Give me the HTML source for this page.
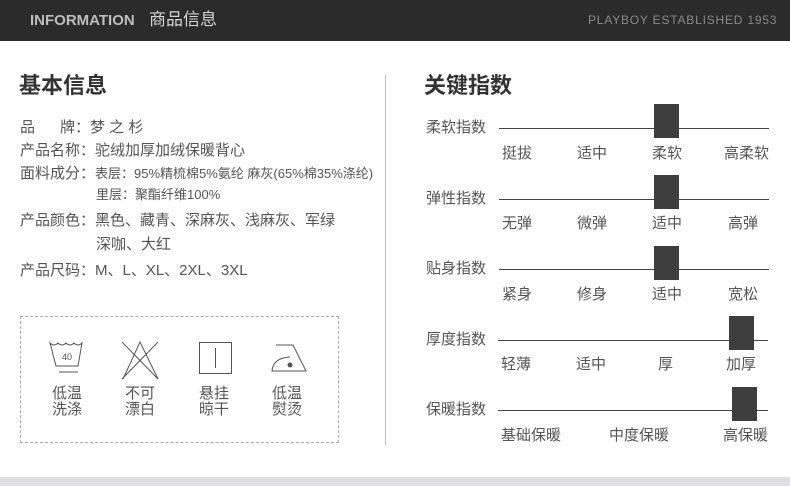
<!DOCTYPE html>
<html><head><meta charset="utf-8"><style>
*{margin:0;padding:0;box-sizing:border-box}
body{width:790px;height:496px;background:#fff;position:relative;overflow:hidden;font-family:"Liberation Sans","Noto Sans CJK SC",sans-serif;color:#555}
.a{position:absolute;white-space:nowrap;line-height:18px}
.hd{position:absolute;left:0;top:0;width:790px;height:41px;background:#2b2b2b}
.t{font-size:15px;line-height:18px}
.line{position:absolute;height:1px;background:#444}
.mk{position:absolute;width:25px;height:34px;background:#3e3e3e}
</style></head><body>
<div class="hd"></div>
<div class="a" style="left:30px;top:12px;color:#bdbdbd;font-size:15px;font-weight:bold;line-height:18px">INFORMATION</div>
<div class="a" style="left:149px;top:10px;color:#d5d5d5;font-size:17px;line-height:20px">商品信息</div>
<div class="a" style="left:588px;top:12px;color:#8a8a8a;font-size:12px;letter-spacing:0.8px;line-height:16px">PLAYBOY ESTABLISHED 1953</div>

<div class="a" style="left:19px;top:73px;font-size:22px;font-weight:bold;color:#333;line-height:26px">基本信息</div>
<div class="a t" style="left:20px;top:119px">品&nbsp;&nbsp;&nbsp;&nbsp;&nbsp;&nbsp;牌：梦 之 杉</div>
<div class="a t" style="left:20px;top:142px">产品名称：驼绒加厚加绒保暖背心</div>
<div class="a t" style="left:20px;top:165px">面料成分：<span style="font-size:13px">表层：95%精梳棉5%氨纶 麻灰(65%棉35%涤纶)</span></div>
<div class="a" style="left:96px;top:186px;font-size:13px">里层：聚酯纤维100%</div>
<div class="a t" style="left:20px;top:212px">产品颜色：黑色、藏青、深麻灰、浅麻灰、军绿</div>
<div class="a t" style="left:96px;top:236px">深咖、大红</div>
<div class="a t" style="left:20px;top:262px">产品尺码：M、L、XL、2XL、3XL</div>

<div class="a" style="left:385px;top:75px;width:1px;height:370px;background:#bbb"></div>

<div class="a" style="left:20px;top:316px;width:319px;height:127px;border:1px dashed #aaa"></div>
<svg class="a" style="left:0;top:0" width="390" height="496">
<g fill="none" stroke="#555" stroke-width="1">
<path d="M50 343 Q54 347 58 343 Q62 347 66 343 Q70 347 74 343 Q78 347 82 343 L78 366 L56 366 Z"/>
<line x1="59" y1="372" x2="78" y2="372"/>
<path d="M123 379 L140 342 L158 379"/><line x1="122" y1="342" x2="158" y2="379"/><line x1="158" y1="342" x2="122" y2="379"/>
<rect x="199.5" y="342.5" width="32" height="31"/><line x1="215.5" y1="348" x2="215.5" y2="368"/>
<path d="M276 345 L293 345 L306 371 L272 371 Q273 358 290 357"/>
</g>
<circle cx="290" cy="365" r="2.5" fill="#555"/>
<text x="67" y="360" font-size="9" fill="#555" text-anchor="middle" font-family="Liberation Sans">40</text>
</svg>
<div class="a t" style="left:52px;top:386px;line-height:16px;white-space:normal;width:34px">低温洗涤</div>
<div class="a t" style="left:125px;top:386px;line-height:16px;white-space:normal;width:34px">不可漂白</div>
<div class="a t" style="left:199px;top:386px;line-height:16px;white-space:normal;width:34px">悬挂晾干</div>
<div class="a t" style="left:272px;top:386px;line-height:16px;white-space:normal;width:34px">低温熨烫</div>

<div class="a" style="left:424px;top:73px;font-size:22px;font-weight:bold;color:#333;line-height:26px">关键指数</div>

<div class="a t" style="left:426px;top:119px">柔软指数</div>
<div class="line" style="left:499px;top:128px;width:270px"></div>
<div class="mk" style="left:654px;top:104px"></div>
<div class="a t" style="left:502px;top:145px">挺拔</div><div class="a t" style="left:577px;top:145px">适中</div><div class="a t" style="left:652px;top:145px">柔软</div><div class="a t" style="left:724px;top:145px">高柔软</div>

<div class="a t" style="left:426px;top:190px">弹性指数</div>
<div class="line" style="left:499px;top:199px;width:270px"></div>
<div class="mk" style="left:654px;top:175px"></div>
<div class="a t" style="left:502px;top:215px">无弹</div><div class="a t" style="left:577px;top:215px">微弹</div><div class="a t" style="left:652px;top:215px">适中</div><div class="a t" style="left:728px;top:215px">高弹</div>

<div class="a t" style="left:426px;top:260px">贴身指数</div>
<div class="line" style="left:499px;top:269px;width:270px"></div>
<div class="mk" style="left:654px;top:246px"></div>
<div class="a t" style="left:502px;top:286px">紧身</div><div class="a t" style="left:577px;top:286px">修身</div><div class="a t" style="left:652px;top:286px">适中</div><div class="a t" style="left:728px;top:286px">宽松</div>

<div class="a t" style="left:426px;top:331px">厚度指数</div>
<div class="line" style="left:498px;top:340px;width:270px"></div>
<div class="mk" style="left:729px;top:316px"></div>
<div class="a t" style="left:501px;top:356px">轻薄</div><div class="a t" style="left:576px;top:356px">适中</div><div class="a t" style="left:658px;top:356px">厚</div><div class="a t" style="left:726px;top:356px">加厚</div>

<div class="a t" style="left:426px;top:401px">保暖指数</div>
<div class="line" style="left:498px;top:410px;width:270px"></div>
<div class="mk" style="left:732px;top:387px"></div>
<div class="a t" style="left:501px;top:427px">基础保暖</div><div class="a t" style="left:609px;top:427px">中度保暖</div><div class="a t" style="left:723px;top:427px">高保暖</div>

<div class="a" style="left:0;top:477px;width:790px;height:9px;background:#e0e0e4"></div>
</body></html>
